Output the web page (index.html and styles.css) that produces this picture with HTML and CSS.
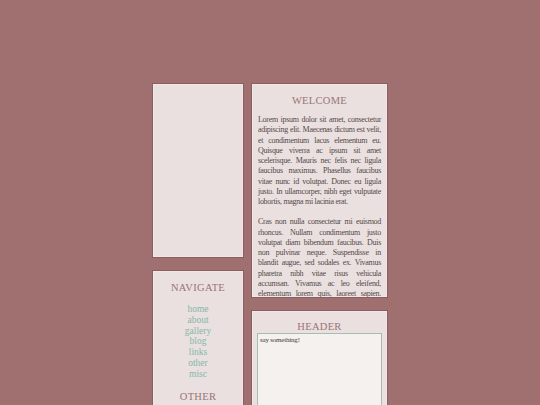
FILE: index.html
```html
<!DOCTYPE html>
<html>
<head>
<meta charset="utf-8">
<link rel="stylesheet" href="styles.css">
</head>
<body>
<div class="layout">
  <div class="col col-left">
    <div class="box box-blank"></div>
    <div class="box box-nav">
      <h2 class="title">NAVIGATE</h2>
      <ul class="links">
        <li><a href="#">home</a></li>
        <li><a href="#">about</a></li>
        <li><a href="#">gallery</a></li>
        <li><a href="#">blog</a></li>
        <li><a href="#">links</a></li>
        <li><a href="#">other</a></li>
        <li><a href="#">misc</a></li>
      </ul>
      <h2 class="title">OTHER</h2>
    </div>
  </div>
  <div class="col col-right">
    <div class="box box-welcome">
      <h2 class="title">WELCOME</h2>
      <p class="text">Lorem ipsum dolor sit amet, consectetur adipiscing elit. Maecenas dictum est velit, et condimentum lacus elementum eu. Quisque viverra ac ipsum sit amet scelerisque. Mauris nec felis nec ligula faucibus maximus. Phasellus faucibus vitae nunc id volutpat. Donec eu ligula justo. In ullamcorper, nibh eget vulputate lobortis, magna mi lacinia erat.</p>
      <p class="text">Cras non nulla consectetur mi euismod rhoncus. Nullam condimentum justo volutpat diam bibendum faucibus. Duis non pulvinar neque. Suspendisse in blandit augue, sed sodales ex. Vivamus pharetra nibh vitae risus vehicula accumsan. Vivamus ac leo eleifend, elementum lorem quis, laoreet sapien. Nunc sed lectus vel nibh tincidunt faucibus.</p>
    </div>
    <div class="box box-header">
      <h2 class="title">HEADER</h2>
      <textarea class="say">say something!</textarea>
    </div>
  </div>
</div>
</body>
</html>
```
FILE: styles.css
```css
* { box-sizing: border-box; }
html, body { margin: 0; padding: 0; }
body {
  background: #a07070;
  font-family: "Liberation Serif", "Times New Roman", serif;
  height: 405px;
  overflow: hidden;
}
.layout {
  display: flex;
  justify-content: center;
  gap: 7px;
  padding-top: 83px;
}
.col {
  display: flex;
  flex-direction: column;
  gap: 12px;
}
.col-left { width: 92px; }
.col-right { width: 137px; }
.box {
  background: #e9e0df;
  border: 1px solid #8c5e5f;
  box-shadow: inset 0 0 0 1px #efe8e7;
}
.box-blank { height: 175px; }
.box-nav {
  height: 200px;
  padding-top: 10px;
  text-align: center;
}
.title {
  margin: 0;
  font-weight: normal;
  font-size: 10.5px;
  letter-spacing: 0.3px;
  color: #9c7378;
  text-align: center;
  line-height: 13px;
}
.links {
  list-style: none;
  margin: 10px 0 10px;
  padding: 0;
  font-size: 9.5px;
  line-height: 10.8px;
}
.links a {
  color: #86b8a6;
  text-decoration: none;
}
.box-welcome {
  height: 215px;
  overflow: hidden;
  padding: 10px 6px 0 6px;
}
.box-welcome .title { margin-bottom: 8px; }
.text {
  margin: 0 0 10px;
  font-size: 8px;
  letter-spacing: -0.3px;
  line-height: 10.25px;
  color: #564a4a;
  text-align: justify;
}
.box-header {
  height: 200px;
  padding: 9px 5px 0 5px;
}
.say {
  display: block;
  width: 100%;
  height: 150px;
  margin-top: 0;
  background: #f4f1ef;
  border: 1px solid #a8bdb2;
  font-family: "Liberation Serif", serif;
  font-size: 7px;
  letter-spacing: -0.2px;
  color: #4a3a3a;
  padding: 2px;
  resize: none;
  outline: none;
}
```
